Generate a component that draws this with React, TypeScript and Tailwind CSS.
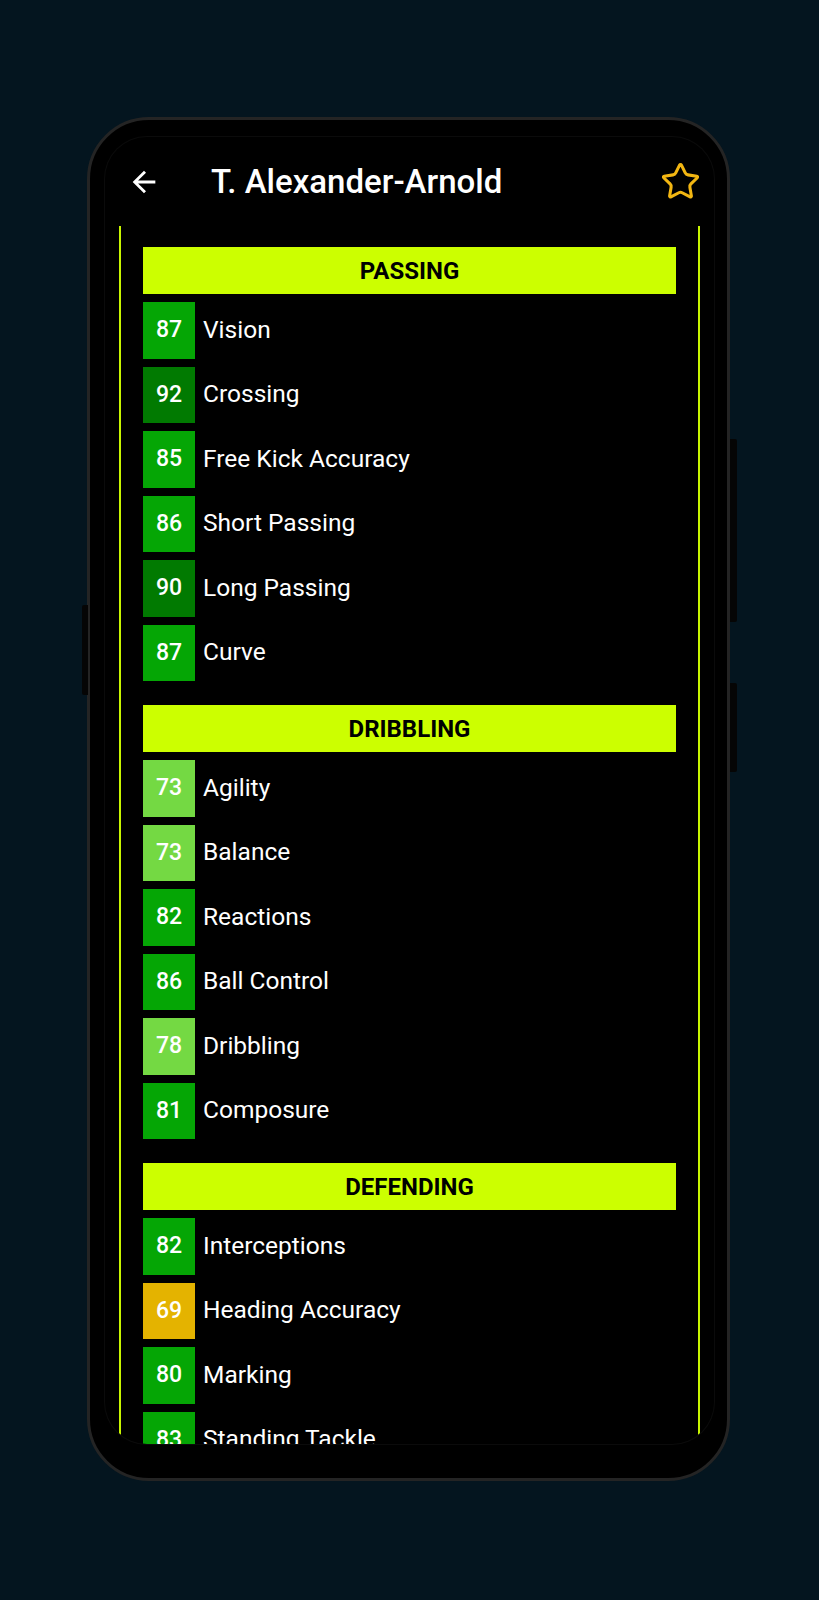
import React from 'react';
import { Star } from 'lucide-react';

type Stat = { value: number; label: string };
type Section = { title: string; stats: Stat[] };

const sections: Section[] = [
  {
    title: 'PASSING',
    stats: [
      { value: 87, label: 'Vision' },
      { value: 92, label: 'Crossing' },
      { value: 85, label: 'Free Kick Accuracy' },
      { value: 86, label: 'Short Passing' },
      { value: 90, label: 'Long Passing' },
      { value: 87, label: 'Curve' },
    ],
  },
  {
    title: 'DRIBBLING',
    stats: [
      { value: 73, label: 'Agility' },
      { value: 73, label: 'Balance' },
      { value: 82, label: 'Reactions' },
      { value: 86, label: 'Ball Control' },
      { value: 78, label: 'Dribbling' },
      { value: 81, label: 'Composure' },
    ],
  },
  {
    title: 'DEFENDING',
    stats: [
      { value: 82, label: 'Interceptions' },
      { value: 69, label: 'Heading Accuracy' },
      { value: 80, label: 'Marking' },
      { value: 83, label: 'Standing Tackle' },
    ],
  },
];

// rating -> box colour
function ratingClass(v: number) {
  if (v >= 90) return 'bg-[#017a01]';
  if (v >= 80) return 'bg-[#05a605]';
  if (v >= 70) return 'bg-[#74d943]';
  return 'bg-[#e4b300]';
}

function StatRow({ stat }: { stat: Stat }) {
  return (
    <div className="flex h-[56.5px] items-center">
      <div
        className={`${ratingClass(stat.value)} flex h-full w-[52px] shrink-0 items-center justify-center text-[23px] font-medium text-white`}
      >
        {stat.value}
      </div>
      <span className="ml-[8px] text-[24.5px] text-white">{stat.label}</span>
    </div>
  );
}

export default function App() {
  return (
    <div
      className="min-h-[1600px] w-full bg-[#04151f] pt-[117px]"
      style={{ fontFamily: 'Roboto, "Noto Sans", sans-serif' }}
    >
      {/* phone body */}
      <div className="relative ml-[87px] box-border flex h-[1364px] w-[643px] rounded-[62px] border-[3px] border-[#242424] bg-black pb-[34px] pl-[15px] pr-[13px] pt-[17px]">
        {/* side buttons */}
        <div className="absolute left-[-8px] top-[485px] h-[90px] w-[6px] rounded-l-[2px] bg-[#050505]" />
        <div className="absolute right-[-10px] top-[319px] h-[183px] w-[7px] rounded-r-[2px] bg-[#050505]" />
        <div className="absolute right-[-10px] top-[563px] h-[89px] w-[7px] rounded-r-[2px] bg-[#050505]" />

        {/* screen */}
        <div className="flex flex-1 flex-col overflow-hidden rounded-[42px] bg-black ring-1 ring-[#0b0b0b]">
          {/* app bar */}
          <div className="flex h-[89px] shrink-0 items-center pl-[22px] pr-[13px]">
            <svg width="34" height="34" viewBox="0 0 24 24" fill="white">
              <path d="M20 11H7.83l5.59-5.59L12 4l-8 8 8 8 1.41-1.41L7.83 13H20v-2z" />
            </svg>
            <h1 className="ml-[50px] flex-1 text-[33px] font-medium leading-none text-white">
              T. Alexander-Arnold
            </h1>
            <Star size={41} strokeWidth={1.8} color="#f2b612" />
          </div>

          {/* stats list */}
          <div className="mx-[14px] mb-[14px] flex-1 border-x-2 border-[#c8f500] px-[22px] pt-[21px]">
            <div className="flex flex-col gap-[24px]">
              {sections.map((s) => (
                <div key={s.title} className="flex flex-col gap-[8px]">
                  <div className="flex h-[47px] items-center justify-center bg-[#ccff00] text-[24px] font-bold text-black">
                    {s.title}
                  </div>
                  {s.stats.map((st) => (
                    <StatRow key={st.label} stat={st} />
                  ))}
                </div>
              ))}
            </div>
          </div>
        </div>
      </div>
    </div>
  );
}
